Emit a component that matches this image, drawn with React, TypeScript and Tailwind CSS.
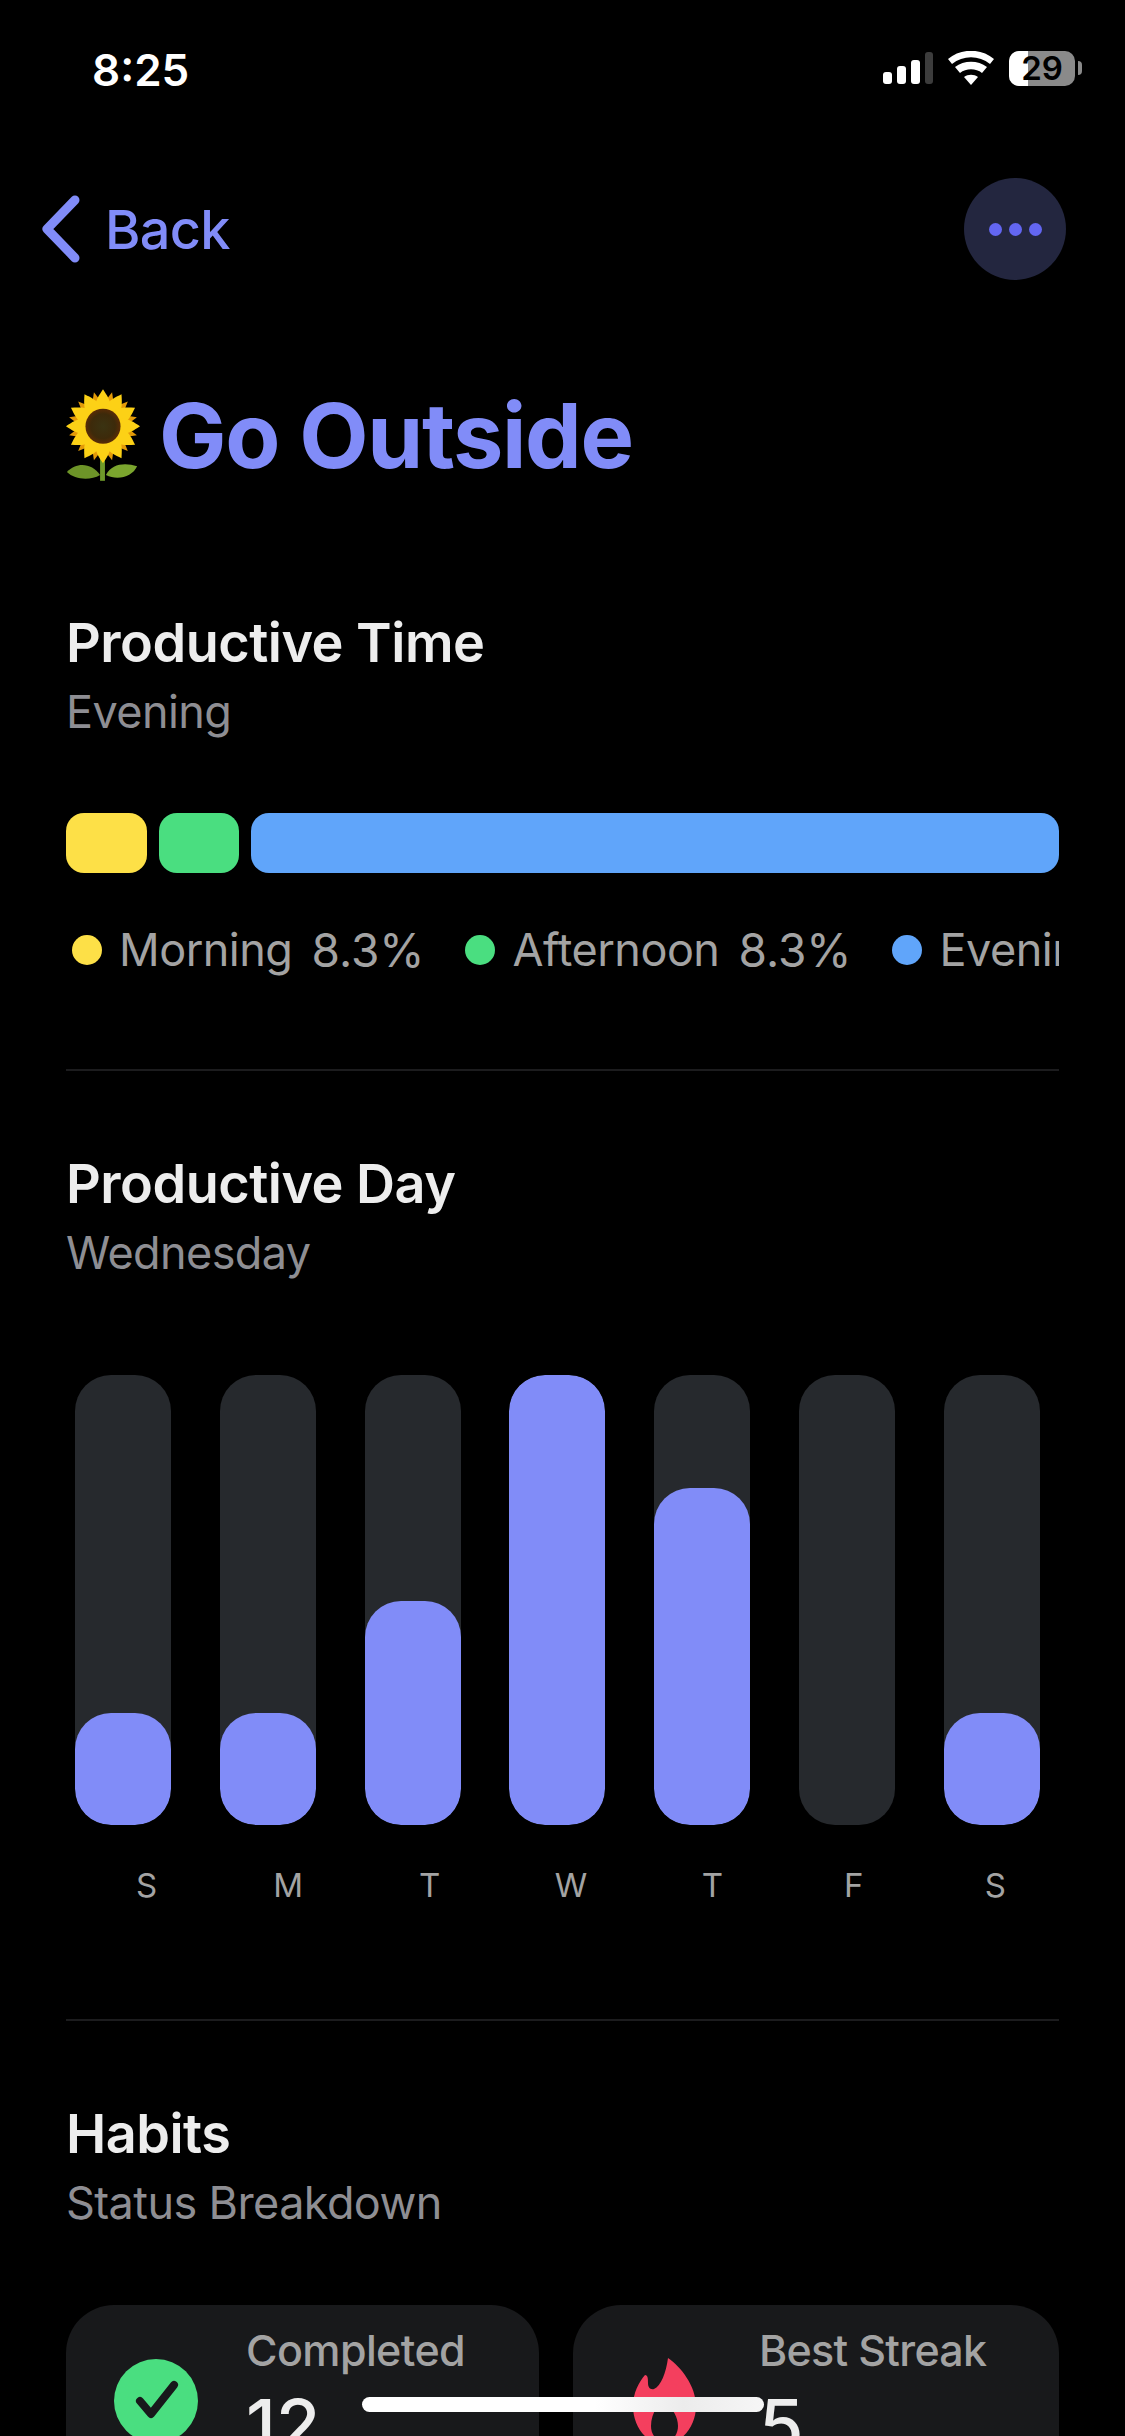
const DAYS = [
  { label: 'S', fill: 112 },
  { label: 'M', fill: 112 },
  { label: 'T', fill: 224 },
  { label: 'W', fill: 450 },
  { label: 'T', fill: 337 },
  { label: 'F', fill: 0 },
  { label: 'S', fill: 112 },
];

const PETAL_ANGLES = [0, 30, 60, 90, 120, 150, 180, 210, 240, 270, 300, 330];

function Sunflower() {
  return (
    <svg width="76" height="93" viewBox="0 0 78 95" className="ml-[-1px] shrink-0">
      <defs>
        <radialGradient id="disk">
          <stop offset="0%" stopColor="#3a3312" />
          <stop offset="70%" stopColor="#3d2a0a" />
          <stop offset="100%" stopColor="#5a2c06" />
        </radialGradient>
      </defs>
      <path d="M36 70h5v24h-5z" fill="#6f9a2a" />
      <path d="M36 88C28 76 12 74 2 85c8 8 24 9 34 3z" fill="#6d9428" />
      <path d="M42 88c6-12 20-13 32-9-5 11-20 15-32 9z" fill="#7ba52e" />
      {PETAL_ANGLES.map(a => (
        <path key={a} d="M39 2l6 14 2 14H31l2-14z" fill="#e39a08" transform={`rotate(${a + 15} 39 38)`} />
      ))}
      {PETAL_ANGLES.map(a => (
        <path key={a} d="M39 0c4 6 8 12 8 18l-8 13-8-13c0-6 4-12 8-18z" fill="#fcd116" transform={`rotate(${a} 39 38)`} />
      ))}
      <circle cx="39" cy="38" r="18" fill="url(#disk)" />
    </svg>
  );
}

function Flame() {
  return (
    <svg width="63" height="86" viewBox="0 0 63 86" className="shrink-0">
      <path
        fillRule="evenodd"
        fill="#f43f5e"
        d="M35 0c13 9 28 28 28 48 0 20-14 38-32 38S0 68 0 48c0-13 6-24 12-31 3 0 3 4 3 8 0 4 2 7 6 6 7-3 12-16 14-31zM33 46c-1 5-3 7-6 6-2 0-3-2-3-3-4 6-6 12-6 19 0 9 6 16 14 16s13-8 13-16c0-9-5-17-12-22z"
      />
    </svg>
  );
}

function SectionHead({ title, sub }: { title: string; sub: string }) {
  return (
    <div>
      <div className="h-[60px] text-[54px] leading-[60px] font-semibold text-[#ededed] tracking-[-0.5px]">{title}</div>
      <div className="mt-[9px] h-[60px] text-[45px] leading-[60px] text-[#8e8e93] tracking-[-0.6px]">{sub}</div>
    </div>
  );
}

function LegendItem({ color, label, value, gap }: { color: string; label: string; value: string; gap: string }) {
  return (
    <div className={`flex items-center shrink-0 ${gap}`}>
      <span className={`h-[30px] w-[30px] rounded-full ${color}`} />
      <span className="ml-[17px] text-[45px] leading-[56px] text-[#a3a3a3] tracking-[-0.5px]">{label}</span>
      <span className="ml-[19px] text-[46px] leading-[56px] text-[#a3a3a3]">{value}</span>
    </div>
  );
}

export default function App() {
  return (
    <div className="relative h-[2436px] w-[1125px] overflow-hidden bg-black font-['Inter',sans-serif]">
      {/* Status bar */}
      <div className="flex h-[92px] items-end justify-between pl-[92px] pr-[43px]">
        <span className="h-[46px] text-[44px] leading-[48px] font-semibold text-white">8:25</span>
        <div className="flex h-[48px] items-center">
          <div className="flex items-end gap-[5px]">
            <span className="h-[12px] w-[9px] rounded-[3px] bg-white" />
            <span className="h-[18px] w-[9px] rounded-[3px] bg-white" />
            <span className="h-[24px] w-[9px] rounded-[3px] bg-white" />
            <span className="h-[32px] w-[8px] rounded-[3px] bg-[#3c3c3c]" />
          </div>
          <svg width="46" height="34" viewBox="0 0 46 34" className="ml-[15px]">
            <path d="M23 34l-7-8c4-3 10-3 14 0z" fill="#fff" />
            <path d="M12 22l-5-6c9-7 23-7 32 0l-5 6c-6-5-16-5-22 0z" fill="#fff" />
            <path d="M4 13l-4-5c13-11 33-11 46 0l-4 5C31 4 15 4 4 13z" fill="#fff" />
          </svg>
          <div className="relative ml-[15px] flex h-[35px] w-[66px] items-center justify-center rounded-[10px] bg-[#8a8a8a]">
            <span className="absolute inset-y-0 left-0 w-[19px] rounded-l-[10px] bg-white" />
            <span className="relative text-[33px] leading-[35px] font-semibold text-black">29</span>
          </div>
          <span className="ml-[3px] h-[14px] w-[4px] rounded-r-full bg-[#8a8a8a]" />
        </div>
      </div>

      {/* Nav */}
      <div className="mt-[86px] flex items-center justify-between pl-[42px] pr-[59px]">
        <div className="flex items-center gap-[25px]">
          <svg width="38" height="68" viewBox="0 0 38 68" fill="none">
            <path d="M33 5L5 34l28 29" stroke="#818cf8" strokeWidth="9" strokeLinecap="round" strokeLinejoin="round" />
          </svg>
          <span className="pt-[2px] text-[54px] leading-[64px] font-medium text-[#818cf8] tracking-[-0.7px]">Back</span>
        </div>
        <div className="flex h-[102px] w-[102px] items-center justify-center gap-[7px] rounded-full bg-[#23263f]">
          <span className="h-[13px] w-[13px] rounded-full bg-[#6366f1]" />
          <span className="h-[13px] w-[13px] rounded-full bg-[#6366f1]" />
          <span className="h-[13px] w-[13px] rounded-full bg-[#6366f1]" />
        </div>
      </div>

      <div className="px-[66px]">
        {/* Title */}
        <div className="mt-[108px] flex h-[95px] items-center">
          <Sunflower />
          <span className="ml-[18px] text-[90px] leading-[95px] font-bold text-[#818cf8] tracking-[-1.3px]">Go Outside</span>
        </div>

        {/* Productive time */}
        <div className="mt-[130px]">
          <SectionHead title="Productive Time" sub="Evening" />
        </div>
        <div className="mt-[71px] flex h-[60px] gap-[12px]">
          <div className="w-[81px] rounded-[18px] bg-[#fde047]" />
          <div className="w-[80px] rounded-[18px] bg-[#4ade80]" />
          <div className="flex-1 rounded-[18px] bg-[#60a5fa]" />
        </div>
        <div className="mt-[49px] flex h-[56px] overflow-hidden pl-[6px]">
          <LegendItem color="bg-[#fde047]" label="Morning" value="8.3%" gap="mr-[41px]" />
          <LegendItem color="bg-[#4ade80]" label="Afternoon" value="8.3%" gap="mr-[41px]" />
          <LegendItem color="bg-[#60a5fa]" label="Evening" value="83.3%" gap="" />
        </div>
        <div className="mt-[91px] h-[2px] bg-[#1c1c1e]" />

        {/* Productive day */}
        <div className="mt-[83px]">
          <SectionHead title="Productive Day" sub="Wednesday" />
        </div>
        <div className="mt-[92px] ml-[9px] flex h-[450px] w-[965px] justify-between">
          {DAYS.map((d, i) => (
            <div key={i} className="relative flex w-[96px] items-end overflow-hidden rounded-[36px] bg-[#26292d]">
              <div className="w-full rounded-[36px] bg-[#818cf8]" style={{ height: d.fill }} />
            </div>
          ))}
        </div>
        <div className="mt-[40px] ml-[10px] grid w-[990px] grid-cols-7">
          {DAYS.map((d, i) => (
            <span key={i} className="text-center text-[33px] leading-[40px] text-[#a3a3a3]">{d.label}</span>
          ))}
        </div>
        <div className="mt-[114px] h-[2px] bg-[#1c1c1e]" />

        {/* Habits */}
        <div className="mt-[83px]">
          <SectionHead title="Habits" sub="Status Breakdown" />
        </div>
        <div className="mt-[72px] grid grid-cols-[473px_486px] gap-[34px]">
          <div className="flex h-[192px] items-center rounded-[48px] bg-[#18191b] pl-[48px]">
            <svg width="84" height="84" viewBox="0 0 84 84" className="shrink-0">
              <circle cx="42" cy="42" r="42" fill="#4ade80" />
              <path d="M26 42l11 13 23-29" fill="none" stroke="#18191b" strokeWidth="8" strokeLinecap="round" strokeLinejoin="round" />
            </svg>
            <div className="ml-[48px] self-start pt-[17px]">
              <div className="text-[43px] leading-[56px] font-medium text-[#a3a3a3] tracking-[-0.6px]">Completed</div>
              <div className="mt-[8px] text-[72px] leading-[78px] font-medium text-[#ededed]">12</div>
            </div>
          </div>
          <div className="flex h-[192px] items-center rounded-[48px] bg-[#18191b] pl-[60px]">
            <Flame />
            <div className="ml-[63px] self-start pt-[17px]">
              <div className="text-[43px] leading-[56px] font-medium text-[#a3a3a3] tracking-[-0.7px]">Best Streak</div>
              <div className="mt-[8px] text-[72px] leading-[78px] font-medium text-[#ededed]">5</div>
            </div>
          </div>
        </div>
      </div>

      {/* Home indicator */}
      <div className="absolute left-[362px] top-[2397px] h-[15px] w-[402px] rounded-full bg-[linear-gradient(90deg,#fff_0%,#fff_58%,#ececec_80%,#f6f6f6_100%)]" />
    </div>
  );
}
